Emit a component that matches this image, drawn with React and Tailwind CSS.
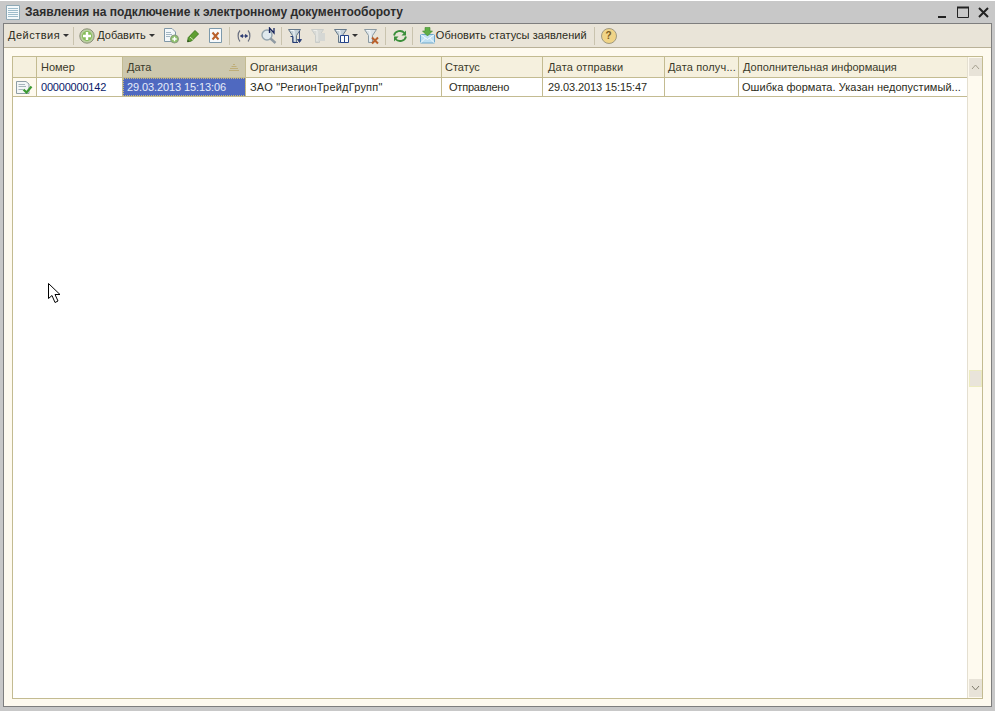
const Sep = () => <div className="w-px h-[18px] bg-[#c9c3ae] shrink-0" />;

const Caret = () => (
  <svg width="6" height="4" viewBox="0 0 6 4" className="shrink-0"><path d="M0 0H6L3 3Z" fill="#333" /></svg>
);

const Funnel = ({ fill = "#c3cfd7", stroke = "#66798a" }) => (
  <>
    <path d="M1.5 2.5H13.5L9.5 8.5V15.5H5.5V8.5Z" fill={fill} stroke={stroke} strokeWidth="1" />
    <path d="M3.5 3.5H7L7 14" fill="none" stroke="#f4f8fa" strokeWidth="1" />
  </>
);

const Ico = ({ children, w = 18, h = 18, className = "" }) => (
  <svg width={w} height={h} viewBox={`0 0 ${w} ${h}`} className={`shrink-0 ${className}`}>{children}</svg>
);

const cols = [
  { w: "w-[24px]", label: "" },
  { w: "w-[86px]", label: "Номер", hd: "pl-[4px]", cell: "00000000142", cellCls: "text-[#0a1a6a] pl-[4px] tracking-[-0.2px]" },
  { w: "w-[123px]", label: "Дата", hd: "pl-[4px]", cell: "29.03.2013 15:13:06", active: true },
  { w: "w-[196px]", label: "Организация", hd: "pl-[4px] tracking-[0.1px]", cell: 'ЗАО "РегионТрейдГрупп"', cellCls: "pl-[4px] tracking-[0.2px]" },
  { w: "w-[101px]", label: "Статус", hd: "pl-[3px]", cell: "Отправлено", cellCls: "pl-[7px] tracking-[-0.2px]" },
  { w: "w-[122px]", label: "Дата отправки", hd: "pl-[5px] tracking-[0.15px]", cell: "29.03.2013 15:15:47", cellCls: "pl-[5px] tracking-[-0.1px]" },
  { w: "w-[74px]", label: "Дата получ...", hd: "pl-[3px] tracking-[0.15px]", cell: "", cellCls: "" },
  { w: "w-[228px]", label: "Дополнительная информация", hd: "pl-[4px]", cell: "Ошибка формата. Указан недопустимый...", cellCls: "pl-[3px] tracking-[0.05px]", last: true },
];

export default function App() {
  return (
    <div className="relative w-[996px] h-[711px] bg-white overflow-hidden text-[11px] text-[#2b2b20]" style={{ fontFamily: '"Liberation Sans", Arial, sans-serif' }}>
      <div className="w-[995px] h-[710px] mt-px bg-[#c8c8c8] flex flex-col">
        {/* title bar */}
        <div className="h-[22px] flex items-center shrink-0 pl-[6px] pr-[6px]">
          <Ico w={14} h={15} className="mr-[5px]">
            <path d="M.5.5H13.5V14.5H.5Z" fill="#f4f9fb" stroke="#8fa9b6" />
            <path d="M2 3.5H12M2 5.5H12M2 7.5H12M2 9.5H12M2 11.5H12" stroke="#9dbccb" />
          </Ico>
          <span className="font-bold text-[12px] text-[#2c2c2c]">Заявления на подключение к электронному документообороту</span>
          <div className="ml-auto flex items-center gap-[9px]">
            <Ico w={11} h={11}><path d="M1 10H9" stroke="#222" strokeWidth="2" /></Ico>
            <Ico w={12} h={12}><path d="M.5 1.5H11.5V11.5H.5Z" fill="none" stroke="#222" /><path d="M0 1.5H12" stroke="#222" strokeWidth="2" /></Ico>
            <Ico w={11} h={11}><path d="M1 1L10 10M10 1L1 10" stroke="#222" strokeWidth="2" /></Ico>
          </div>
        </div>
        {/* body */}
        <div className="flex-1 mx-[3px] mb-[4px] border border-[#7e7e7e] flex flex-col min-h-0 w-[989px]">
          {/* toolbar */}
          <div className="h-[24px] bg-[#e9e4d8] border-b border-[#b9b198] flex items-center shrink-0 pl-[4px]">
            <span className="mr-[3px] tracking-[0.5px]">Действия</span>
            <Caret />
            <div className="w-[4px]" />
            <Sep />
            <div className="w-[5px]" />
            <Ico w={16} h={16} className="mr-[2px]">
              <circle cx="8" cy="8" r="7.2" fill="#b9cfa0" stroke="#8c8f7a" />
              <circle cx="8" cy="8" r="5" fill="#86bd5a" />
              <path d="M8 4V12M4 8H12" stroke="#fff" strokeWidth="2.4" />
            </Ico>
            <span className="mr-[3px]">Добавить</span>
            <Caret />
            <div className="w-[8px]" />
            <Ico w={16} h={17} className="mr-[7px]">
              <path d="M1.5 1.5H9L12.5 5V14.5H1.5Z" fill="#f4f8fa" stroke="#7f97a7" />
              <path d="M3 5.5H8M3 7.5H9M3 9.5H7" stroke="#a3b7c3" />
              <circle cx="11.5" cy="12" r="4" fill="#8cc06a" stroke="#8a9a80" />
              <path d="M11.5 9.8V14.2M9.3 12H13.7" stroke="#fff" strokeWidth="1.4" />
            </Ico>
            <Ico w={14} h={14} className="mr-[9px]">
              <path d="M9 1.5L12.5 5L5.5 12L1.5 12.8L2.3 8.5Z" fill="#5fa032" stroke="#3f7a22" />
              <path d="M4 8L7.5 11" stroke="#cfe8b8" />
              <path d="M1.5 12.8L3 12.5L2 11Z" fill="#222" />
            </Ico>
            <Ico w={13} h={15} className="mr-[7px]">
              <path d="M.5.5H12.5V14.5H.5Z" fill="#f7fafc" stroke="#7d99ab" />
              <path d="M3.5 4.5L9.5 11.5M9.5 4.5L3.5 11.5" stroke="#b9602c" strokeWidth="2" />
            </Ico>
            <Sep />
            <div className="w-[6px]" />
            <Ico w={16} h={14} className="mr-[8px]">
              <path d="M4 1.5C1.5 4 1.5 10 4 12.5M12 1.5C14.5 4 14.5 10 12 12.5" fill="none" stroke="#6a7080" strokeWidth="1.2" />
              <path d="M4.5 7H11.5M4.5 7L6.5 5.5V8.5ZM11.5 7L9.5 5.5V8.5Z" fill="#26366e" stroke="#26366e" strokeWidth=".8" />
            </Ico>
            <Ico w={17} h={17} className="mr-[4px]">
              <circle cx="7" cy="8" r="5" fill="#dfe9ee" stroke="#93a4ae" strokeWidth="1.4" />
              <path d="M10.5 11.5L15.5 16" stroke="#8f9aa3" strokeWidth="2.4" />
              <path d="M9.5 6V1L14 6V1" fill="none" stroke="#17255e" strokeWidth="1.3" />
            </Ico>
            <Sep />
            <div className="w-[5px]" />
            <Ico w={17} h={17} className="mr-[6px]">
              <Funnel />
              <path d="M3.5 9.5H6V15.5H11" stroke="#253a75" fill="none" />
              <path d="M12.5 4V14M10.5 12.5H14.5L12.5 15.5Z" stroke="#253a75" fill="#253a75" strokeWidth=".8" />
            </Ico>
            <Ico w={17} h={17} className="mr-[6px] opacity-50">
              <Funnel fill="#c9d1d6" stroke="#aab5bc" />
              <path d="M9 6H15V14H9Z" fill="#c2ccd2" />
            </Ico>
            <Ico w={17} h={17} className="mr-[2px]">
              <Funnel />
              <path d="M7.5 8.5H15.5V15.5H7.5Z" fill="#fbfdfd" stroke="#26458a" />
              <path d="M11.5 8.5V15.5" stroke="#26458a" />
            </Ico>
            <Caret />
            <div className="w-[5px]" />
            <Ico w={17} h={18} className="mr-[5px]">
              <Funnel fill="#dde4e8" stroke="#8b9aa3" />
              <path d="M9 10.5L15 16.5M15 10.5L9 16.5" stroke="#b9602c" strokeWidth="2" />
            </Ico>
            <Sep />
            <div className="w-[6px]" />
            <Ico w={16} h={14} className="mr-[4px]">
              <path d="M2 6.5A6 5.5 0 0 1 12.5 4" fill="none" stroke="#3b8f3b" strokeWidth="1.8" />
              <path d="M14 1.5V6.5H9.5Z" fill="#3b8f3b" />
              <path d="M14 7.5A6 5.5 0 0 1 3.5 10" fill="none" stroke="#3b8f3b" strokeWidth="1.8" />
              <path d="M2 12.5V7.5H6.5Z" fill="#3b8f3b" />
            </Ico>
            <Sep />
            <div className="w-[6px]" />
            <Ico w={17} h={17}>
              <path d="M1.5 7.5H15.5V16H1.5Z" fill="#bfe0f2" stroke="#6fa8cc" />
              <path d="M1.5 7.5L8.5 12.5L15.5 7.5M1.5 16L6.5 11M15.5 16L10.5 11" fill="none" stroke="#f4fbff" />
              <path d="M6 0.5H11V4H13.5L8.5 9L3.5 4H6Z" fill="#5fae45" stroke="#3f8a30" strokeWidth=".6" />
            </Ico>
            <span className="mr-[7px] tracking-[0.04px]">Обновить статусы заявлений</span>
            <Sep />
            <div className="w-[6px]" />
            <div className="w-[16px] h-[16px] rounded-full bg-[#f0d487] border border-[#a09a80] flex items-center justify-center text-[10px] font-bold text-[#7a5a20] shrink-0">?</div>
          </div>
          {/* panel */}
          <div className="flex-1 min-h-0 bg-[#fefaef] pl-[8px] pr-[8px] pt-[8px] pb-[7px]">
            <div className="h-full border border-[#c3bb91] bg-white flex">
              <div className="w-[954px] flex flex-col">
                <div className="h-[21px] flex bg-[#f5f0de] border-b border-[#c3bb91] shrink-0">
                  {cols.map((c, i) => (
                    <div key={i} className={`${c.w} shrink-0 flex items-center justify-between pr-[5px] ${c.hd || ""} ${c.active ? "bg-[#cdc8ae]" : ""} ${c.last ? "" : "border-r border-[#c3bb91]"}`}>
                      <span className="text-[#3a3a2a] whitespace-nowrap">{c.label}</span>
                      {c.active && (
                        <Ico w={12} h={9}><path d="M5 1.5H7M3.5 3.5H8.5M2 5.5H10M1 7.5H11" stroke="#bfae78" /></Ico>
                      )}
                    </div>
                  ))}
                </div>
                <div className="h-[19px] flex border-b border-[#c3bb91] shrink-0 bg-white">
                  {cols.map((c, i) => i === 0 ? (
                    <div key={i} className="w-[24px] shrink-0 border-r border-[#c3bb91] bg-[#fefaef] flex items-center justify-center">
                      <Ico w={17} h={13}>
                        <path d="M.5 .5H10L13 3V12.5H.5Z" fill="#f3f6f7" stroke="#8e9ea5" />
                        <path d="M2.5 3.5H9M2.5 5.5H10M2.5 8.5H7" stroke="#a6b5bb" />
                        <path d="M7.5 8.5L10.5 11.5L15.5 5.5" fill="none" stroke="#3c9b33" strokeWidth="2.2" />
                      </Ico>
                    </div>
                  ) : c.active ? (
                    <div key={i} className={`${c.w} shrink-0 flex items-center pl-[4px] tracking-[-0.1px] bg-[#4f69c0] text-[#e6ecfa] border-r border-[#c3bb91] outline-1 -outline-offset-1 outline-dotted outline-[#c9b97c]`}>{c.cell}</div>
                  ) : (
                    <div key={i} className={`${c.w} shrink-0 flex items-center whitespace-nowrap overflow-hidden ${c.cellCls} ${c.last ? "" : "border-r border-[#c3bb91]"}`}>{c.cell}</div>
                  ))}
                </div>
                <div className="flex-1 bg-white" />
              </div>
              {/* scrollbar */}
              <div className="flex-1 bg-[#fefaef] border-l border-[#e4dfd0] flex flex-col items-center justify-between relative pt-px pb-px">
                <div className="w-[13px] h-[18px] bg-[#e8e3d8] flex items-center justify-center">
                  <Ico w={9} h={6}><path d="M1 5L4.5 1L8 5" fill="none" stroke="#a5a08f" /></Ico>
                </div>
                <div className="absolute left-px top-[313px] w-[13px] h-[17px] bg-[#e9e4da] border border-[#ecebc0]" />
                <div className="w-[13px] h-[18px] bg-[#e8e3d8] flex items-center justify-center">
                  <Ico w={9} h={6}><path d="M1 1L4.5 5L8 1" fill="none" stroke="#7d7a6c" /></Ico>
                </div>
              </div>
            </div>
          </div>
        </div>
      </div>
      {/* mouse pointer */}
      <svg width="14" height="21" viewBox="0 0 14 21" className="absolute left-[48px] top-[283px]">
        <path d="M.5.5V15.5L4 12.5L7 19.5L10 18L7 11.5H12Z" fill="#fff" stroke="#000" />
      </svg>
    </div>
  );
}
